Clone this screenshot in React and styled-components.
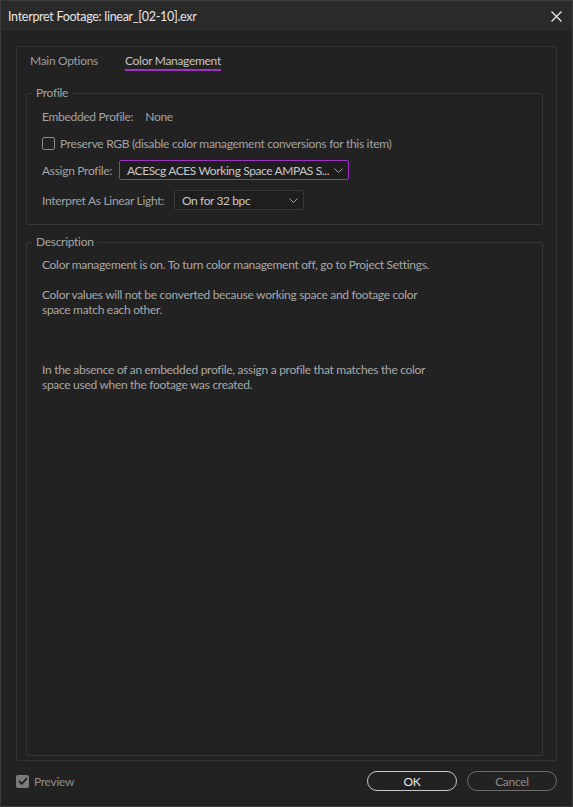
import styled, { createGlobalStyle } from "styled-components";

const GlobalStyle = createGlobalStyle`
  html, body {
    margin: 0;
    padding: 0;
    background: #222222;
  }
  * {
    box-sizing: border-box;
  }
`;

const Window = styled.div`
  width: 573px;
  height: 807px;
  display: flex;
  flex-direction: column;
  background: #222222;
  border: 1px solid #3c3c3c;
  font-family: Lato, "Open Sans", sans-serif;
  font-size: 12px;
  letter-spacing: -0.3px;
  color: #a9a9a9;
`;

const TitleBar = styled.div`
  height: 30px;
  flex: none;
  display: flex;
  align-items: center;
  justify-content: space-between;
  padding: 0 10px 0 7px;
  background: #2a2a2a;
`;

const Title = styled.span`
  color: #e6e6e6;
  font-size: 12.5px;
  letter-spacing: -0.3px;
`;

const CloseButton = styled.button`
  width: 12px;
  height: 12px;
  padding: 0;
  border: none;
  background: none;
  display: flex;
  align-items: center;
  justify-content: center;
  cursor: pointer;
`;

const Body = styled.div`
  flex: 1;
  display: flex;
  flex-direction: column;
  padding: 15px 15px 0 15px;
`;

const Panel = styled.div`
  height: 715px;
  flex: none;
  display: flex;
  flex-direction: column;
  border: 1px solid #343434;
  border-radius: 2px;
`;

const Tabs = styled.div`
  display: flex;
  gap: 27px;
  padding: 5px 0 0 13px;
  height: 39px;
`;

const Tab = styled.div`
  height: 19px;
  line-height: 17px;
  color: ${(p) => (p.$active ? "#c4c4c4" : "#9d9d9d")};
  border-bottom: 2px solid ${(p) => (p.$active ? "#a12fc3" : "transparent")};
  cursor: pointer;
`;

const Group = styled.fieldset`
  margin: ${(p) => p.$margin};
  padding: 0;
  border: 1px solid #363636;
  border-radius: 2px;
  min-width: 0;
  flex: ${(p) => (p.$grow ? 1 : "none")};
  display: flex;
  flex-direction: column;
`;

const Legend = styled.legend`
  margin-left: 5px;
  padding: 0 4px;
  line-height: 14px;
  color: #a4a4a4;
`;

const GroupContent = styled.div`
  padding: ${(p) => p.$padding};
  display: flex;
  flex-direction: column;
`;

const Row = styled.div`
  height: 20px;
  margin-top: ${(p) => p.$top || 0}px;
  display: flex;
  align-items: center;
  gap: ${(p) => p.$gap || 0}px;
`;

const Label = styled.span`
  color: #a3a3a3;
  white-space: nowrap;
`;

const Value = styled.span`
  color: #a3a3a3;
`;

const CheckBox = styled.span`
  width: 13px;
  height: 13px;
  flex: none;
  margin-right: 5px;
  border-radius: 2px;
  display: flex;
  align-items: center;
  justify-content: center;
  border: ${(p) => (p.$checked ? "none" : "1.5px solid #8a8a8a")};
  background: ${(p) => (p.$checked ? "#7b7b7b" : "transparent")};
`;

const Select = styled.div`
  width: ${(p) => p.$width}px;
  height: 20px;
  flex: none;
  display: flex;
  align-items: center;
  gap: 6px;
  padding: 0 5px 0 7px;
  background: #1e1e1e;
  border: 1px solid ${(p) => (p.$focused ? "#a12fc3" : "#393939")};
  border-radius: 2px;
  color: #c8c8c8;
  white-space: nowrap;
`;

const SelectText = styled.span`
  flex: 1;
  min-width: 0;
  letter-spacing: -0.4px;
`;

const Paragraph = styled.p`
  margin: ${(p) => p.$top || 0}px 0 0 0;
  line-height: 15px;
  color: #a8a8a8;
`;

const Footer = styled.div`
  flex: 1;
  display: flex;
  align-items: center;
  justify-content: space-between;
  padding: 0 0 5px 0;
`;

const PreviewToggle = styled.label`
  display: flex;
  align-items: center;
  color: #8c8c8c;
`;

const Buttons = styled.div`
  display: flex;
  gap: 10px;
`;

const PillButton = styled.button`
  width: 90px;
  height: 20px;
  border-radius: 10px;
  background: transparent;
  font-family: inherit;
  font-size: 12px;
  letter-spacing: -0.3px;
  padding: 0;
  border: 1px solid ${(p) => (p.$primary ? "#c9c9c9" : "#6c6c6c")};
  color: ${(p) => (p.$primary ? "#e8e8e8" : "#8c8c8c")};
  cursor: pointer;
`;

const Chevron = () => (
  <svg width="9" height="5" viewBox="0 0 9 5" style={{ flex: "none" }}>
    <path d="M0.5 0.5 L4.5 4.5 L8.5 0.5" fill="none" stroke="#a0a0a0" strokeWidth="1" />
  </svg>
);

const App = () => {
  return (
    <>
      <GlobalStyle />
      <Window>
        <TitleBar>
          <Title>Interpret Footage: linear_[02-10].exr</Title>
          <CloseButton>
            <svg width="11" height="11" viewBox="0 0 11 11">
              <path d="M0.5 0.5 L10.5 10.5 M10.5 0.5 L0.5 10.5" stroke="#e8e8e8" strokeWidth="1.3" />
            </svg>
          </CloseButton>
        </TitleBar>
        <Body>
          <Panel>
            <Tabs>
              <Tab>Main Options</Tab>
              <Tab $active>Color Management</Tab>
            </Tabs>

            <Group $margin="0 13px 0 9px">
              <Legend>Profile</Legend>
              <GroupContent $padding="6px 15px 14px 15px">
                <Row $gap={12}>
                  <Label>Embedded Profile:</Label>
                  <Value>None</Value>
                </Row>
                <Row $top={7}>
                  <CheckBox />
                  <Label>Preserve RGB (disable color management conversions for this item)</Label>
                </Row>
                <Row $top={7} $gap={7}>
                  <Label>Assign Profile:</Label>
                  <Select $width={230} $focused>
                    <SelectText>ACEScg ACES Working Space AMPAS S...</SelectText>
                    <Chevron />
                  </Select>
                </Row>
                <Row $top={10} $gap={10}>
                  <Label>Interpret As Linear Light:</Label>
                  <Select $width={130}>
                    <SelectText>On for 32 bpc</SelectText>
                    <Chevron />
                  </Select>
                </Row>
              </GroupContent>
            </Group>

            <Group $margin="10px 13px 4px 9px" $grow>
              <Legend>Description</Legend>
              <GroupContent $padding="8px 15px 0 15px">
                <Paragraph>
                  Color management is on. To turn color management off, go to Project Settings.
                </Paragraph>
                <Paragraph $top={15}>
                  Color values will not be converted because working space and footage color
                  <br />
                  space match each other.
                </Paragraph>
                <Paragraph $top={45}>
                  In the absence of an embedded profile, assign a profile that matches the color
                  <br />
                  space used when the footage was created.
                </Paragraph>
              </GroupContent>
            </Group>
          </Panel>

          <Footer>
            <PreviewToggle>
              <CheckBox $checked>
                <svg width="10" height="8" viewBox="0 0 10 8">
                  <path d="M1 4 L3.8 6.8 L9 1.2" fill="none" stroke="#1f1f1f" strokeWidth="1.8" />
                </svg>
              </CheckBox>
              Preview
            </PreviewToggle>
            <Buttons>
              <PillButton $primary>OK</PillButton>
              <PillButton>Cancel</PillButton>
            </Buttons>
          </Footer>
        </Body>
      </Window>
    </>
  );
};

export default App;
